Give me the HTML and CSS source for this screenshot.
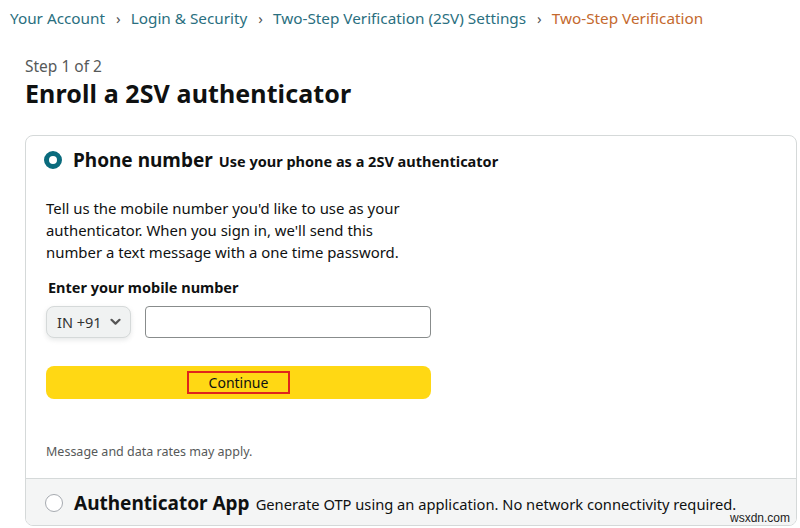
FILE: index.html
```html
<!DOCTYPE html>
<html>
<head>
<meta charset="utf-8">
<link rel="stylesheet" href="styles.css">
</head>
<body>
<nav class="crumbs">
  <a class="crumb">Your Account</a><span class="sep">›</span>
  <a class="crumb">Login &amp; Security</a><span class="sep">›</span>
  <a class="crumb">Two-Step Verification (2SV) Settings</a><span class="sep">›</span>
  <span class="crumb current">Two-Step Verification</span>
</nav>
<main class="page">
  <div class="step">Step 1 of 2</div>
  <h1 class="title">Enroll a 2SV authenticator</h1>
  <section class="card">
    <div class="option selected">
      <div class="option-head">
        <span class="radio on"></span>
        <span class="opt-title">Phone number</span>
        <span class="opt-sub">Use your phone as a 2SV authenticator</span>
      </div>
      <div class="option-body">
        <p class="desc">Tell us the mobile number you'd like to use as your authenticator. When you sign in, we'll send this number a text message with a one time password.</p>
        <label class="field-label">Enter your mobile number</label>
        <div class="phone-row">
          <div class="select">IN +91 <svg class="chev" width="11" height="8" viewBox="0 0 11 8"><path d="M1.5 1.8 L5.5 5.6 L9.5 1.8" fill="none" stroke="#555" stroke-width="2.2" stroke-linecap="round" stroke-linejoin="round"/></svg></div>
          <div class="input"></div>
        </div>
        <button class="btn"><span class="btn-label">Continue</span></button>
        <div class="note">Message and data rates may apply.</div>
      </div>
    </div>
    <div class="option alt">
      <div class="option-head">
        <span class="radio"></span>
        <span class="opt-title">Authenticator App</span>
        <span class="opt-sub2">Generate OTP using an application. No network connectivity required.</span>
      </div>
      <div class="watermark">wsxdn.com</div>
    </div>
  </section>
</main>
</body>
</html>
```
FILE: styles.css
```css
* { box-sizing: border-box; }
body {
  margin: 0;
  background: #fff;
  font-family: "Noto Sans", "Open Sans", sans-serif;
  color: #0f1111;
  width: 800px;
  height: 528px;
  overflow: hidden;
}
.crumbs {
  display: flex;
  align-items: center;
  height: 36px;
  padding: 0 0 0 10px;
  font-size: 15.3px;
  color: #2a6f80;
  white-space: nowrap;
}
.crumb { color: #2a6f80; }
.crumb.current { color: #c4692e; }
.sep { color: #555; margin: 0 10px 0 11px; font-size: 15px; }
.page { padding: 0 3px 0 25px; }
.step { margin-top: 19px; font-size: 15.5px; color: #565959; line-height: 22px; }
.title { margin: 0; font-size: 25px; font-weight: 700; line-height: 32px; letter-spacing: 0.1px; }
.card {
  margin-top: 26px;
  border: 1px solid #d5d9d9;
  border-radius: 8px;
  overflow: hidden;
  height: 391px;
  display: flex;
  flex-direction: column;
}
.option-head { display: flex; align-items: baseline; white-space: nowrap; }
.selected { padding: 11px 20px 0 18px; }
.radio {
  width: 18px; height: 18px;
  border-radius: 50%;
  border: 1px solid #a6aab0;
  background: #fff;
  align-self: center;
  margin-right: 11px;
  flex: none;
}
.radio.on { border: 5px solid #0a6b7d; }
.opt-title { font-size: 19px; font-weight: 700; margin-right: 6px; }
.opt-sub { font-size: 14.5px; font-weight: 700; }
.option-body { padding: 24px 0 0 2px; }
.desc { margin: 0; width: 370px; font-size: 14.9px; line-height: 22px; }
.field-label { display: block; margin: 13px 0 0 2px; font-size: 14.5px; font-weight: 700; line-height: 22px; }
.phone-row { display: flex; gap: 14px; margin-top: 8px; }
.select {
  width: 85px; height: 32px;
  border-radius: 8px;
  background: #f0f2f2;
  border: 1px solid #d5d9d9;
  box-shadow: 0 2px 5px rgba(213,217,217,.6);
  display: flex; align-items: center; gap: 8px;
  padding-left: 10px;
  font-size: 14.5px;
  color: #333;
}
.input {
  width: 286px; height: 32px;
  border: 1px solid #888c8c;
  border-radius: 4px;
}
.btn {
  display: flex; justify-content: center; align-items: center;
  margin-top: 28px;
  width: 385px; height: 33px;
  background: #ffd814;
  border: 0;
  border-radius: 8px;
  font-family: inherit;
  padding: 0;
}
.btn-label {
  display: flex; justify-content: center; align-items: center;
  width: 103px; height: 23px;
  border: 2px solid #e0251b;
  font-size: 14px;
  color: #0f1111;
}
.note { margin-top: 44px; font-size: 12.5px; color: #565959; line-height: 18px; }
.alt {
  margin-top: 17px;
  border-top: 1px solid #d5d9d9;
  background: #f4f5f5;
  padding: 11px 20px 0 19px;
  flex: 1;
  position: relative;
}
.opt-sub2 { font-size: 14.7px; }
.watermark {
  position: absolute;
  right: 6px; bottom: 0;
  font-size: 12px;
  line-height: 14px;
  color: #222;
  font-family: "Liberation Sans", sans-serif;
}
```
